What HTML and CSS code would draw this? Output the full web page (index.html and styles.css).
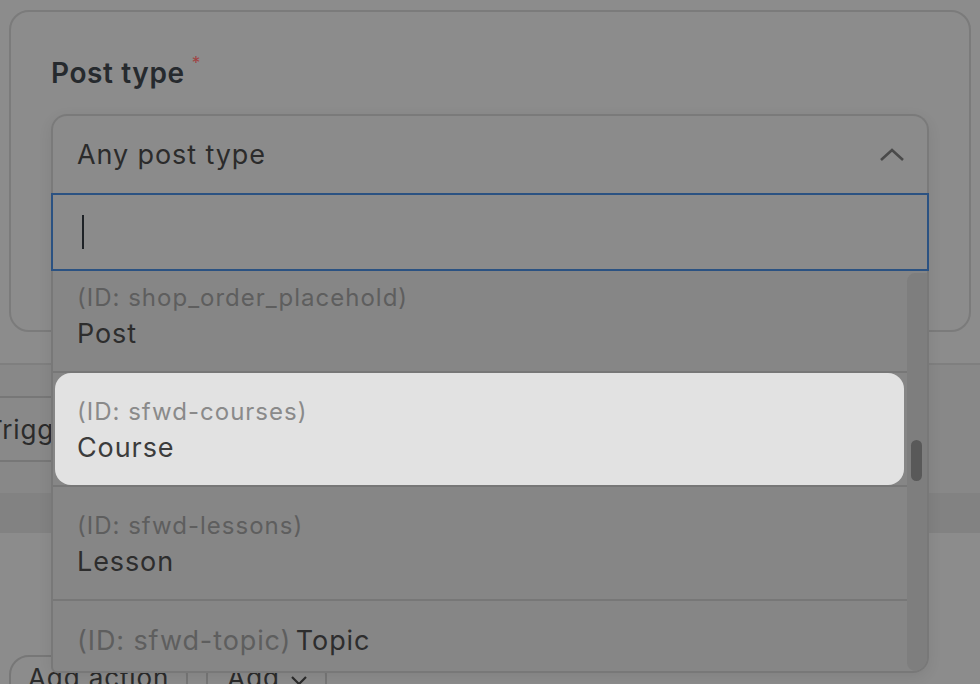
FILE: index.html
```html
<!DOCTYPE html>
<html lang="en">
<head>
    <meta charset="UTF-8">
    <meta name="viewport" content="width=device-width, initial-scale=1.0">
    <title>Post type</title>
    <link rel="stylesheet" href="styles.css">
</head>
<body>
    <div class="page">
        <div class="card">
            <div class="field-label">Post type<span class="required">*</span></div>
        </div>

        <div class="section">
            <button class="trigger-btn">Trigger</button>
        </div>
        <div class="band"></div>

        <div class="actions-row">
            <button class="btn">Add action</button>
            <button class="btn">Add
                <svg class="chev-down" width="18" height="12" viewBox="0 0 18 12"><polyline points="2,3 9,10 16,3" fill="none" stroke="#2b2b2b" stroke-width="2.2"/></svg>
            </button>
        </div>

        <!-- otvorený select -->
        <div class="select">
            <div class="select-head">
                <span>Any post type</span>
                <svg width="26" height="14" viewBox="0 0 26 14"><polyline points="2,12 13,2 24,12" fill="none" stroke="#4a4a4a" stroke-width="2.6"/></svg>
            </div>
            <div class="select-search"><span class="caret"></span></div>
            <div class="select-list">
                <div class="options">
                    <div class="option">
                        <div class="option-body">
                            <div class="option-id">(ID: shop_order_placehold)</div>
                            <div class="option-name">Post</div>
                        </div>
                    </div>
                    <div class="option active">
                        <div class="option-body">
                            <div class="option-id">(ID: sfwd-courses)</div>
                            <div class="option-name">Course</div>
                        </div>
                    </div>
                    <div class="option">
                        <div class="option-body">
                            <div class="option-id">(ID: sfwd-lessons)</div>
                            <div class="option-name">Lesson</div>
                        </div>
                    </div>
                    <div class="option">
                        <div class="option-body inline">
                            <span class="option-id">(ID: sfwd-topic)</span> <span class="option-name">Topic</span>
                        </div>
                    </div>
                </div>
                <div class="scrollbar"><div class="thumb"></div></div>
            </div>
        </div>
    </div>
</body>
</html>
```

FILE: styles.css
```css
* {
    box-sizing: border-box;
}
body {
    margin: 0;
    background-color: #8c8c8c;
    font-family: Inter, "Liberation Sans", sans-serif;
    color: #2b2b2b;
    overflow: hidden;
    height: 684px;
}
.page {
    position: relative;
    height: 684px;
    overflow: hidden;
}
.card {
    margin: 10px 9px 0 9px;
    height: 322px;
    border: 2px solid #7b7b7b;
    border-radius: 20px;
    padding: 43px 40px 0;
}
.field-label {
    font-size: 28px;
    font-weight: 600;
    letter-spacing: 0.6px;
    color: #262a2e;
    line-height: 36px;
}
.required {
    color: #a14242;
    font-size: 17px;
    font-weight: 400;
    vertical-align: 14px;
    line-height: 14px;
    margin-left: 7px;
}
.section {
    margin-top: 31px;
    border-top: 2px solid #7f7f7f;
    background-color: #888888;
    padding: 31px 0;
}
.trigger-btn {
    display: block;
    height: 66px;
    margin-left: -34px;
    padding: 0 18px;
    border: 2px solid #777777;
    border-radius: 8px;
    background-color: #898989;
    font-family: inherit;
    font-size: 26px;
    letter-spacing: 0.9px;
    color: #2b2b2b;
}
.band {
    height: 40px;
    background-color: #828282;
}
.actions-row {
    display: flex;
    gap: 18px;
    margin-top: 122px;
    padding-left: 9px;
}
.btn {
    display: flex;
    align-items: flex-start;
    gap: 10px;
    height: 60px;
    padding: 3px 17px 0;
    border: 2px solid #777777;
    border-radius: 20px;
    background: transparent;
    font-family: inherit;
    font-size: 26px;
    letter-spacing: 0.9px;
    line-height: 36px;
    color: #2b2b2b;
}
.btn + .btn {
    padding-left: 19px;
}
.chev-down {
    margin-top: 14px;
}

/* dropdown */
.select {
    position: absolute;
    left: 51px;
    top: 114px;
    width: 878px;
    box-shadow: 0 4px 14px rgba(0, 0, 0, 0.08);
    border-radius: 16px;
}
.select-head {
    height: 79px;
    border: 2px solid #7a7a7a;
    border-bottom: none;
    border-radius: 16px 16px 0 0;
    background-color: #8b8b8b;
    display: flex;
    align-items: center;
    justify-content: space-between;
    padding: 0 22px 0 24px;
    font-size: 27px;
    letter-spacing: 0.9px;
    color: #2b2b2b;
}
.select-search {
    height: 78px;
    border: 2px solid #2b5282;
    background-color: #8b8b8b;
    padding: 20px 0 0 29px;
}
.caret {
    display: block;
    width: 2px;
    height: 34px;
    background-color: #1e2226;
}
.select-list {
    position: relative;
    height: 402px;
    overflow: hidden;
    background-color: #868686;
    border: 2px solid #787878;
    border-top: none;
    border-radius: 0 0 16px 6px;
}
.options {
    margin-top: -12px;
    margin-right: 20px;
}
.option {
    border-bottom: 2px solid #777777;
}
.option-body {
    height: 112px;
    padding: 24px 24px 0;
}
.option-body.inline {
    padding-top: 22px;
    line-height: 36px;
}
.option-id {
    font-size: 24px;
    letter-spacing: 1px;
    line-height: 30px;
    color: #5e5e5e;
}
.inline .option-id {
    font-size: 27px;
    letter-spacing: 0.9px;
}
.option-name {
    font-size: 27px;
    letter-spacing: 0.9px;
    line-height: 36px;
    margin-top: 3px;
    color: #2d2d2d;
}
.inline .option-name {
    margin-top: 0;
}
.option.active .option-body {
    background-color: #e2e2e2;
    border-radius: 16px;
    margin: 0 3px 0 2px;
    padding-left: 22px;
}
.option.active .option-id {
    color: #8a8a8a;
}
.option.active .option-name {
    color: #3c3c3c;
}
.scrollbar {
    position: absolute;
    top: 2px;
    right: 0;
    bottom: 0;
    width: 20px;
    background-color: #7e7e7e;
    border-radius: 10px 0 14px 10px;
}
.thumb {
    position: absolute;
    left: 4px;
    top: 167px;
    width: 11px;
    height: 41px;
    border-radius: 6px;
    background-color: #595959;
}
```
